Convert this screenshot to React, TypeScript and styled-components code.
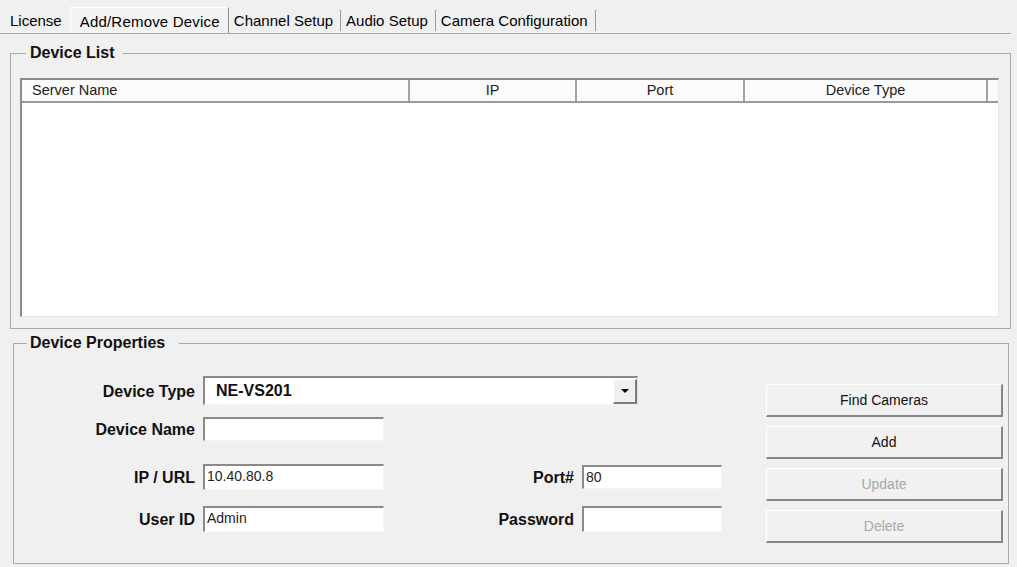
import styled, { createGlobalStyle } from "styled-components";

const GlobalStyle = createGlobalStyle`
  html, body {
    margin: 0;
    padding: 0;
    background: #f0f0f0;
  }
  body {
    font-family: "Liberation Sans", Arial, sans-serif;
    color: #000;
  }
  * {
    box-sizing: border-box;
  }
`;

const tabs = ["License", "Add/Remove Device", "Channel Setup", "Audio Setup", "Camera Configuration"];
const activeTab = 1;

const columns = [
  { title: "Server Name", width: 388, align: "left" },
  { title: "IP", width: 167, align: "center" },
  { title: "Port", width: 168, align: "center" },
  { title: "Device Type", width: 243, align: "center" },
];

const Window = styled.div`
  width: 1017px;
  height: 567px;
  background: #f0f0f0;
  overflow: hidden;
`;

const TabStrip = styled.div`
  display: flex;
  align-items: flex-end;
  width: 1011px;
  height: 34px;
  padding-left: 5px;
  border-bottom: 1px solid #a9a9a9;
`;

const Tab = styled.div<{ $active?: boolean; $divider?: boolean }>`
  font-size: 15px;
  white-space: nowrap;
  height: ${(p) => (p.$active ? "26px" : "21px")};
  line-height: 21px;
  margin-bottom: ${(p) => (p.$active ? "0" : "2px")};
  padding: ${(p) => (p.$active ? "3px 8px 0 9px" : "0 7px 0 5px")};
  letter-spacing: ${(p) => (p.$active ? "0.2px" : "0")};
  background: ${(p) => (p.$active ? "#f3f3f3" : "transparent")};
  border-left: ${(p) => (p.$active ? "1px solid #ffffff" : "none")};
  border-top: ${(p) => (p.$active ? "1px solid #ffffff" : "none")};
  border-right: ${(p) =>
    p.$active ? "1px solid #8f8f8f" : p.$divider ? "1px solid #9a9a9a" : "1px solid transparent"};
`;

const GroupBox = styled.fieldset<{ $left: number; $width: number; $top: number }>`
  margin: ${(p) => `${p.$top}px 0 0 ${p.$left}px`};
  width: ${(p) => p.$width}px;
  border: 1px solid #a9a9a9;
  min-width: 0;
`;

const ListGroup = styled(GroupBox)`
  padding: 16px 11px 11px 9px;
`;

const PropsGroup = styled(GroupBox)`
  padding: 24px 5px 20px 7px;
`;

const Legend = styled.legend<{ $offset: number; $padL: number; $padR: number }>`
  font-size: 16px;
  font-weight: bold;
  line-height: 18px;
  padding: ${(p) => `0 ${p.$padR}px 0 ${p.$padL}px`};
  margin-left: ${(p) => p.$offset}px;
  color: #111;
`;

const ListView = styled.div`
  height: 239px;
  background: #ffffff;
  border-top: 2px solid #8c8c8c;
  border-left: 2px solid #8c8c8c;
  border-right: 1px solid #e6e6e6;
  border-bottom: 1px solid #e6e6e6;
`;

const HeaderRow = styled.div`
  display: flex;
  height: 23px;
  background: #fbfbfb;
  border-bottom: 2px solid #9a9a9a;
`;

const HeaderCell = styled.div<{ $align: string }>`
  flex: none;
  font-size: 14.5px;
  line-height: 21px;
  color: #222;
  text-align: ${(p) => p.$align};
  padding-left: ${(p) => (p.$align === "left" ? "10px" : "0")};
  border-right: 2px solid #a3a3a3;
`;

const HeaderFiller = styled.div`
  flex: 1;
`;

const PropsBody = styled.div`
  display: flex;
  justify-content: space-between;
  align-items: flex-start;
`;

const Form = styled.div`
  display: flex;
  flex-direction: column;
`;

const FormRow = styled.div<{ $gap: number }>`
  display: grid;
  grid-template-columns: 182px 181px 198px 140px;
  align-items: center;
  margin-top: ${(p) => p.$gap}px;
`;

const Label = styled.label`
  font-size: 16px;
  font-weight: bold;
  color: #111;
  text-align: right;
  padding-right: 8px;
  padding-top: 2px;
  white-space: nowrap;
`;

const TextBox = styled.div<{ $h?: number }>`
  height: ${(p) => p.$h ?? 25}px;
  background: #ffffff;
  border-top: 2px solid #8a8a8a;
  border-left: 2px solid #8a8a8a;
  border-right: 1px solid #f6f6f6;
  border-bottom: 1px solid #f6f6f6;
  font-size: 14px;
  line-height: 21px;
  padding-left: 2px;
  color: #222;
  white-space: nowrap;
  overflow: hidden;
`;

const Combo = styled.div`
  grid-column: 2 / span 3;
  display: flex;
  align-items: center;
  width: 435px;
  height: 29px;
  background: #ffffff;
  border-top: 2px solid #8a8a8a;
  border-left: 2px solid #8a8a8a;
  border-right: 1px solid #dcdcdc;
  border-bottom: 1px solid #f6f6f6;
`;

const ComboText = styled.div`
  flex: 1;
  padding-left: 11px;
  font-size: 16px;
  font-weight: bold;
  color: #111;
`;

const DropButton = styled.div`
  width: 24px;
  height: 25px;
  display: flex;
  align-items: center;
  justify-content: center;
  background: #f0f0f0;
  border-top: 1px solid #ffffff;
  border-left: 1px solid #ffffff;
  border-right: 2px solid #7d7d7d;
  border-bottom: 2px solid #7d7d7d;
`;

const Arrow = styled.div`
  width: 0;
  height: 0;
  border-left: 4px solid transparent;
  border-right: 4px solid transparent;
  border-top: 4px solid #000;
`;

const ButtonColumn = styled.div`
  display: flex;
  flex-direction: column;
  gap: 9px;
  width: 237px;
  margin-top: 8px;
`;

const Button = styled.div<{ $disabled?: boolean }>`
  height: 33px;
  display: flex;
  align-items: center;
  justify-content: center;
  font-size: 14px;
  color: ${(p) => (p.$disabled ? "#a8a8a8" : "#111")};
  background: #f1f1f1;
  border-top: 1px solid #ffffff;
  border-left: 1px solid #ffffff;
  border-right: 2px solid #868686;
  border-bottom: 2px solid #868686;
`;

export default function App() {
  return (
    <Window>
      <GlobalStyle />
      <TabStrip>
        {tabs.map((t, i) => (
          <Tab key={t} $active={i === activeTab} $divider={i !== activeTab - 1}>
            {t}
          </Tab>
        ))}
      </TabStrip>

      <ListGroup $left={10} $width={1001} $top={10}>
        <Legend $offset={6} $padL={4} $padR={9}>
          Device List
        </Legend>
        <ListView>
          <HeaderRow>
            {columns.map((c) => (
              <HeaderCell key={c.title} $align={c.align} style={{ width: c.width }}>
                {c.title}
              </HeaderCell>
            ))}
            <HeaderFiller />
          </HeaderRow>
        </ListView>
      </ListGroup>

      <PropsGroup $left={13} $width={996} $top={5}>
        <Legend $offset={6} $padL={3} $padR={14}>
          Device Properties
        </Legend>
        <PropsBody>
          <Form>
            <FormRow $gap={0}>
              <Label>Device Type</Label>
              <Combo>
                <ComboText>NE-VS201</ComboText>
                <DropButton>
                  <Arrow />
                </DropButton>
              </Combo>
            </FormRow>
            <FormRow $gap={12}>
              <Label>Device Name</Label>
              <TextBox $h={24} />
            </FormRow>
            <FormRow $gap={23}>
              <Label>IP / URL</Label>
              <TextBox $h={26}>10.40.80.8</TextBox>
              <Label>Port#</Label>
              <TextBox $h={24}>80</TextBox>
            </FormRow>
            <FormRow $gap={16}>
              <Label>User ID</Label>
              <TextBox $h={26}>Admin</TextBox>
              <Label>Password</Label>
              <TextBox $h={26} />
            </FormRow>
          </Form>
          <ButtonColumn>
            <Button>Find Cameras</Button>
            <Button>Add</Button>
            <Button $disabled>Update</Button>
            <Button $disabled>Delete</Button>
          </ButtonColumn>
        </PropsBody>
      </PropsGroup>
    </Window>
  );
}
